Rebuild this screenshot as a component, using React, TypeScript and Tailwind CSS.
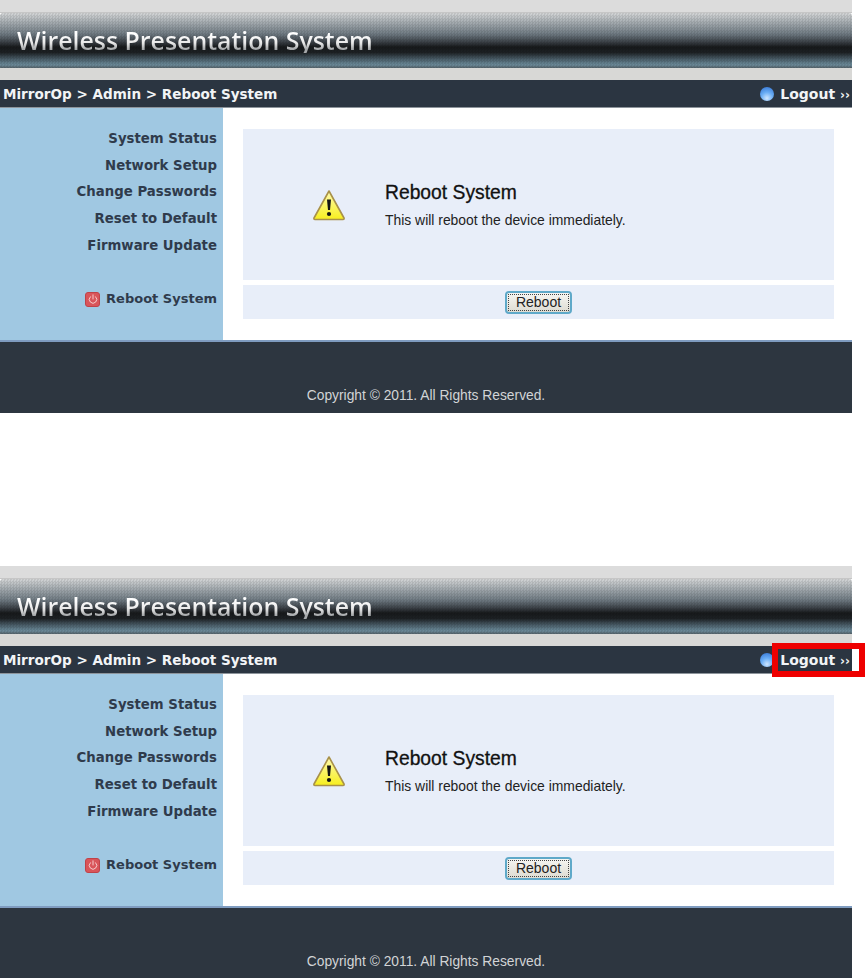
import React from 'react';
import { Power } from 'lucide-react';

const menuItems = ['System Status', 'Network Setup', 'Change Passwords', 'Reset to Default', 'Firmware Update'];

const WarningIcon = () => (
  <svg width="34" height="32" viewBox="0 0 34 32" className="block">
    <defs>
      <linearGradient id="warnFill" x1="0" y1="0" x2="0" y2="1">
        <stop offset="0" stopColor="#fffbb0" />
        <stop offset="1" stopColor="#f7ee1e" />
      </linearGradient>
    </defs>
    <path d="M17 2 L32 29 Q32.5 30.5 31 30.5 L3 30.5 Q1.5 30.5 2 29 Z" fill="url(#warnFill)" stroke="#a8914a" strokeWidth="1.6" strokeLinejoin="round" />
    <path d="M15 10.5 L19 10.5 L18 21 L16 21 Z" fill="#141414" />
    <circle cx="17" cy="25" r="2.1" fill="#141414" />
  </svg>
);

const Screen: React.FC<{ highlight?: boolean }> = ({ highlight }) => {
  return (
    <div className="w-[852px]">
      {/* Banner */}
      <div className="h-[13px] bg-[#dcdcdc] border-b border-[#c6c6c6]" />
      <div className="h-[55px] rounded-t-[3px] bg-[repeating-conic-gradient(rgba(0,0,0,0.08)_0_25%,transparent_0_50%),linear-gradient(180deg,#d3d5d6_0%,#a2a9ae_18%,#6f7a82_38%,#3d4349_52%,#17191b_62%,#1d2124_72%,#43545e_82%,#6b8a99_94%,#55646c_100%)] [background-size:3px_3px,100%_100%] flex items-center pl-[17px]">
        <span className="font-['Open_Sans',sans-serif] font-semibold text-[24.9px] leading-none bg-[linear-gradient(180deg,#ffffff_25%,#e8e8e8_60%,#a5a8aa_85%)] bg-clip-text text-transparent">
          Wireless Presentation System
        </span>
      </div>
      <div className="h-[12px] bg-[#d8d8d6]" />

      {/* Breadcrumb bar */}
      <div className="h-[28px] bg-[#2b3541] border-b border-[#8d949b] flex items-center justify-between pl-[3px] pr-[2px] pt-[1px] font-['DejaVu_Sans',sans-serif] font-bold text-[14px] text-[#f2f4f6]">
        <span className="text-[13.55px]">MirrorOp &gt; Admin &gt; Reboot System</span>
        <div className="relative flex items-center">
          <span className="w-[14px] h-[14px] mr-[6px] rounded-full bg-[radial-gradient(circle_at_50%_80%,#cfe6ff_0%,#69adf5_45%,#2f6fd0_100%)]" />
          <span>Logout</span>
          <span className="ml-[5px] text-[12px] translate-y-[1px]">››</span>
          {highlight && <div className="absolute left-[12px] top-[-7px] w-[93px] h-[34px] border-[6px] border-[#ee0000]" />}
        </div>
      </div>

      {/* Sidebar and content */}
      <div className="flex h-[232px]">
        <div className="w-[223px] bg-[#a0c8e2] pt-[18px] pr-[6px] flex flex-col items-end font-['DejaVu_Sans',sans-serif] font-bold text-[13.3px] text-[#2f3b4c]">
          {menuItems.map((item) => (
            <div key={item} className="h-[26.7px] leading-[26.7px]">{item}</div>
          ))}
          <div className="h-[26.7px] mt-[26.7px] leading-[26.7px] flex items-center gap-[6px] text-[13px]">
            <span className="w-[15px] h-[15px] rounded-[3px] bg-[#d9555a] border border-[#c04248] flex items-center justify-center">
              <Power className="w-[10px] h-[10px] text-[#fbe3e3]" strokeWidth={2} />
            </span>
            Reboot System
          </div>
        </div>

        <div className="flex-1 bg-white pt-[21px] pl-[20px] pr-[18px] flex flex-col gap-[5px] font-['Liberation_Sans',sans-serif]">
          <div className="h-[151px] bg-[#e8eef9] flex items-start pt-[52px] pl-[69px]">
            <div className="mt-[8px] w-[34px]">
              <WarningIcon />
            </div>
            <div className="ml-[39px]">
              <div className="text-[19.3px] leading-[24px] text-[#111] [-webkit-text-stroke:0.3px_#111]">Reboot System</div>
              <div className="mt-[7px] text-[13.9px] leading-[16px] text-[#222]">This will reboot the device immediately.</div>
            </div>
          </div>
          <div className="h-[34px] bg-[#e8eef9] flex items-center justify-center">
            <button className="w-[67px] h-[23px] rounded-[4px] border-2 border-[#5fa9c9] bg-[linear-gradient(180deg,#f6f6f2,#dedcd2)] p-[1px] text-[14px] text-[#222] flex">
              <span className="flex-1 border border-dotted border-[#444] leading-[15px] text-center">Reboot</span>
            </button>
          </div>
        </div>
      </div>

      {/* Footer */}
      <div className="h-[73px] bg-[#2d3640] border-t-2 border-[#7f9cc0] flex items-end justify-center pb-[9px] font-['Liberation_Sans',sans-serif] text-[13.8px] leading-[16px] text-[#d2d4d6]">
        Copyright © 2011. All Rights Reserved.
      </div>
    </div>
  );
};

export default function App() {
  return (
    <div className="w-[865px] h-[978px] bg-white overflow-hidden">
      <Screen />
      <div className="mt-[153px]">
        <Screen highlight />
      </div>
    </div>
  );
}
